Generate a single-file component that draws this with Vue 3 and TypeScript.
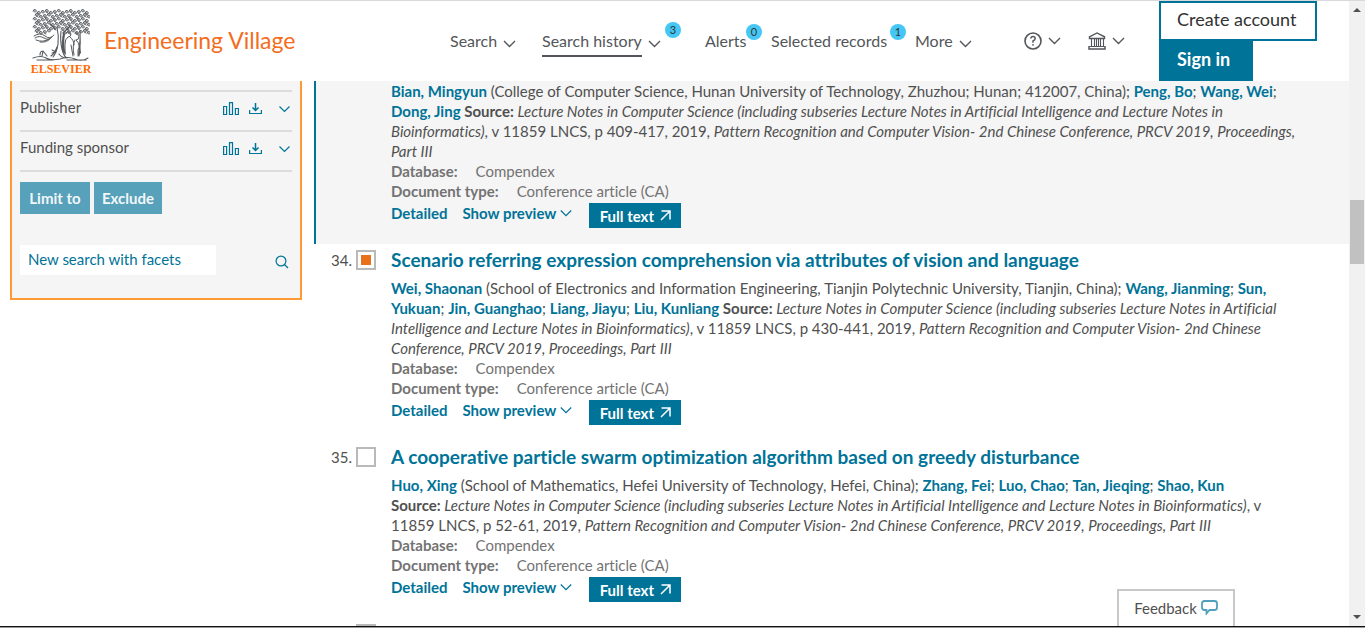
<script setup lang="ts">
import { ref } from 'vue'

type Kind = 'author' | 'label' | 'em' | 'plain'
interface Segment { kind: Kind; text: string }
interface RecordItem { id: number; title: string; lines: Segment[][] }

const a = (text: string): Segment => ({ kind: 'author', text })
const b = (text: string): Segment => ({ kind: 'label', text })
const i = (text: string): Segment => ({ kind: 'em', text })
const p = (text: string): Segment => ({ kind: 'plain', text })

const records: RecordItem[] = [
  {
    id: 33,
    title: '',
    lines: [
      [a('Bian, Mingyun'), p(' (College of Computer Science, Hunan University of Technology, Zhuzhou; Hunan; 412007, China); '), a('Peng, Bo'), p('; '), a('Wang, Wei'), p(';')],
      [a('Dong, Jing'), b(' Source: '), i('Lecture Notes in Computer Science (including subseries Lecture Notes in Artificial Intelligence and Lecture Notes in')],
      [i('Bioinformatics)'), p(', v 11859 LNCS, p 409-417, 2019, '), i('Pattern Recognition and Computer Vision- 2nd Chinese Conference, PRCV 2019, Proceedings,')],
      [i('Part III')],
    ],
  },
  {
    id: 34,
    title: 'Scenario referring expression comprehension via attributes of vision and language',
    lines: [
      [a('Wei, Shaonan'), p(' (School of Electronics and Information Engineering, Tianjin Polytechnic University, Tianjin, China); '), a('Wang, Jianming'), p('; '), a('Sun,')],
      [a('Yukuan'), p('; '), a('Jin, Guanghao'), p('; '), a('Liang, Jiayu'), p('; '), a('Liu, Kunliang'), b(' Source: '), i('Lecture Notes in Computer Science (including subseries Lecture Notes in Artificial')],
      [i('Intelligence and Lecture Notes in Bioinformatics)'), p(', v 11859 LNCS, p 430-441, 2019, '), i('Pattern Recognition and Computer Vision- 2nd Chinese')],
      [i('Conference, PRCV 2019, Proceedings, Part III')],
    ],
  },
  {
    id: 35,
    title: 'A cooperative particle swarm optimization algorithm based on greedy disturbance',
    lines: [
      [a('Huo, Xing'), p(' (School of Mathematics, Hefei University of Technology, Hefei, China); '), a('Zhang, Fei'), p('; '), a('Luo, Chao'), p('; '), a('Tan, Jieqing'), p('; '), a('Shao, Kun')],
      [b('Source: '), i('Lecture Notes in Computer Science (including subseries Lecture Notes in Artificial Intelligence and Lecture Notes in Bioinformatics)'), p(', v')],
      [p('11859 LNCS, p 52-61, 2019, '), i('Pattern Recognition and Computer Vision- 2nd Chinese Conference, PRCV 2019, Proceedings, Part III')],
    ],
  },
]

const selected = ref<number[]>([34])
const facetQuery = ref('New search with facets')
const facets = ['Publisher', 'Funding sponsor']
const nav = [
  { label: 'Search', menu: true, key: 'search' },
  { label: 'Search history', menu: true, count: 3, key: 'history' },
  { label: 'Alerts', menu: false, count: 0, key: 'alerts' },
  { label: 'Selected records', menu: false, count: 1, key: 'selected' },
  { label: 'More', menu: true, key: 'more' },
]

// Curled leaves that fill the crown of the tree in the logo.
const leaves: string[] = []
for (let row = 0; row < 6; row++) {
  for (let col = 0; col < 14; col++) {
    const x = 1 + col * 4 + (row % 2) * 2
    const y = 2 + row * 4 + ((col * 5 + row * 3) % 3) - 1
    if (row === 5 && col > 3 && col < 7) continue
    leaves.push(`M${x} ${y + 1}q1-3 3-1q1 2-1 2q-2 0-1-2`)
    if ((row + col) % 2) leaves.push(`M${x + 1} ${y + 2}l2 1`)
  }
}
const crown = leaves.join('')
</script>

<template>
  <div class="page">
    <header class="header">
      <a class="brand" href="#">
        <span class="logo">
          <svg class="tree" viewBox="0 0 58 52" aria-hidden="true">
            <g fill="none" stroke="#54585c" stroke-linecap="round">
              <path :d="crown" stroke-width=".9" />
              <path d="M2 27q6-4 11 0t9-1M3 29q4-3 9 0t8-1M4 31q7 3 13-1M8 33q6 1 10-3" stroke-width="1" />
              <path d="M25 18q2 9 1 17t-5 13M29 22q-1 10 1 18t5 9M25 38q-2 6-6 9M23 20l-5-5M31 24l7-7M31 29q0-8 6-9M48 22q1 12-1 25" stroke-width="1.1" />
              <path d="M34 24q4-3 5 1q0 3-3 3q-3 2-3 7v10M38 28q4 3 4 8M39 36l2 11M43 24q4-1 4 3t-3 4q5 5 2 10v6M43 31q-3 5-1 15" stroke-width="1" />
              <path d="M1 49q8-3 13 0t14 1q8-3 15 0t13-1M5 51h16M35 51h19M8 46q0-4 3-4l4 5M11 42l-1 5M20 41l4 2M20 44l4-1M27 45q3 4 7 4" stroke-width="1.1" />
            </g>
            <path d="M31 25q-2 8-1 17l4 4q-3-9-1-21M47 28l2 16-3 3 1-10" fill="#54585c" />
          </svg>
          <span class="publisher">ELSEVIER</span>
        </span>
        <span class="product">Engineering Village</span>
      </a>

      <nav class="nav" aria-label="Main">
        <a v-for="item in nav" :key="item.key" href="#" class="nav-item" :class="item.key">
          <span class="nav-label">{{ item.label }}</span>
          <svg v-if="item.menu" class="chev" viewBox="0 0 13 8" aria-hidden="true"><path d="M1 1l5.500 5.500L12 1" /></svg>
          <span v-if="item.count !== undefined" class="badge">{{ item.count }}</span>
        </a>
        <button type="button" class="nav-item help" aria-label="Help">
          <svg width="18" height="18" viewBox="0 0 18 18" fill="none" stroke="currentColor" aria-hidden="true">
            <circle cx="9" cy="9" r="8" stroke-width="1.600" />
            <path d="M6.800 6.500Q7 4.600 9 4.600t2.200 1.900Q11.200 8 9 9v1.800" stroke-width="1.500" />
            <circle cx="9" cy="12.800" r=".9" fill="currentColor" stroke="none" />
          </svg>
          <svg class="chev" viewBox="0 0 13 8" aria-hidden="true"><path d="M1 1l5.500 5.500L12 1" /></svg>
        </button>
        <button type="button" class="nav-item inst" aria-label="Institution">
          <svg width="18" height="18" viewBox="0 0 18 18" fill="none" stroke="currentColor" aria-hidden="true">
            <path d="M1.500 4.800L9 1l7.500 3.800v1.700h-15z" stroke-width="1.400" />
            <path d="M3.500 7v7.500M6.500 7v7.500M8.500 7v7.500M10.500 7v7.500M12.500 7v7.500M15.500 7v7.500M1.500 14.500h15" stroke-width="1.100" />
            <path d="M1 14v3h16v-3" stroke-width="1.500" />
          </svg>
          <svg class="chev" viewBox="0 0 13 8" aria-hidden="true"><path d="M1 1l5.500 5.500L12 1" /></svg>
        </button>
      </nav>

      <div class="account">
        <button type="button" class="create">Create account</button>
        <button type="button" class="signin">Sign in</button>
      </div>
    </header>

    <div class="body">
      <aside class="facets">
        <div v-for="name in facets" :key="name" class="facet">
          <span class="facet-name">{{ name }}</span>
          <button type="button" class="bare" :aria-label="`${name} chart`">
            <svg width="16" height="14" viewBox="0 0 16 14" fill="none" stroke="currentColor" stroke-width="1.200" aria-hidden="true"><path d="M.6 4.500h3v8h-3zM6.500.6h3v11.900h-3zM12.400 6.500h3v6h-3z" /></svg>
          </button>
          <button type="button" class="bare download" :aria-label="`${name} download`">
            <svg width="13" height="12" viewBox="0 0 13 12" fill="none" stroke="currentColor" aria-hidden="true"><path d="M.6 7v3.500h11.800V7" stroke-width="1.200" /><path d="M6.500 0v7.500M3.500 4.500l3 3 3-3" stroke-width="1.500" /></svg>
          </button>
          <button type="button" class="bare expand" :aria-label="`${name} expand`">
            <svg width="11" height="7" viewBox="0 0 11 7" fill="none" stroke="currentColor" stroke-width="1.200" aria-hidden="true"><path d="M.5.5l5 5 5-5" /></svg>
          </button>
        </div>
        <div class="facet-actions">
          <button type="button" class="limit">Limit to</button>
          <button type="button" class="exclude">Exclude</button>
        </div>
        <div class="facet-search">
          <input v-model="facetQuery" type="text" aria-label="New search with facets" />
          <button type="button" class="bare" aria-label="Search">
            <svg width="14" height="14" viewBox="0 0 14 14" fill="none" stroke="currentColor" stroke-width="1.200" aria-hidden="true"><circle cx="6" cy="6" r="4.900" /><path d="M9.500 9.500L13 13" /></svg>
          </button>
        </div>
      </aside>

      <main class="results">
        <article v-for="r in records" :key="r.id" class="record" :class="{ shaded: !r.title }">
          <div class="pick">
            <template v-if="r.title">
              <label :for="`pick-${r.id}`">{{ r.id }}.</label>
              <input :id="`pick-${r.id}`" v-model="selected" type="checkbox" :value="r.id" />
            </template>
          </div>
          <div class="content">
            <h2 v-if="r.title"><a href="#">{{ r.title }}</a></h2>
            <p class="citation">
              <span v-for="(line, n) in r.lines" :key="n" class="line"><template v-for="(s, k) in line" :key="k"><a v-if="s.kind === 'author'" href="#">{{ s.text }}</a><b v-else-if="s.kind === 'label'">{{ s.text }}</b><em v-else-if="s.kind === 'em'">{{ s.text }}</em><template v-else>{{ s.text }}</template></template></span>
            </p>
            <dl>
              <div><dt>Database:</dt><dd>Compendex</dd></div>
              <div><dt>Document type:</dt><dd>Conference article (CA)</dd></div>
            </dl>
            <div class="actions">
              <a href="#" class="detailed">Detailed</a>
              <button type="button" class="bare preview">
                Show preview
                <svg width="12" height="7" viewBox="0 0 12 7" fill="none" stroke="currentColor" stroke-width="1.200" aria-hidden="true"><path d="M.8.5L6 5.700 11.200.5" /></svg>
              </button>
              <button type="button" class="fulltext">
                Full text
                <svg width="11" height="11" viewBox="0 0 11 11" fill="none" stroke="currentColor" stroke-width="1.500" aria-hidden="true"><path d="M1.500 1H10v8.500M10 1L1 10" /></svg>
              </button>
            </div>
          </div>
        </article>
        <article class="record">
          <div class="pick last">
            <input v-model="selected" type="checkbox" :value="36" aria-label="Record 36" />
          </div>
        </article>
      </main>
      <button type="button" class="feedback">
        Feedback
        <svg width="17" height="15" viewBox="0 0 17 15" fill="none" stroke="#4f9fbd" stroke-width="1.800" aria-hidden="true"><path d="M3.500 1h10Q16 1 16 3.500v4Q16 10 13.500 10H8.500L5.500 13.500V10H3.500Q1 10 1 7.500v-4Q1 1 3.500 1z" /></svg>
      </button>
    </div>

    <div class="scrollbar" aria-hidden="true">
      <svg width="8" height="4" viewBox="0 0 8 4"><path d="M0 4l4-4 4 4z" /></svg>
      <div class="track"><div class="thumb"></div></div>
      <svg width="8" height="4" viewBox="0 0 8 4"><path d="M0 0l4 4 4-4z" /></svg>
    </div>
    <div class="edge"></div>
  </div>
</template>

<style>
body {
  margin: 0;
  overflow: hidden;
}
</style>

<style scoped>
.page {
  box-sizing: border-box;
  display: grid;
  grid-template-columns: minmax(0, 1fr) 16px;
  grid-template-rows: 80px minmax(0, 1fr) 2px;
  height: 100vh;
  border-top: 1px solid #d8d8dd;
  background: #fff;
  color: #505050;
  font: 15px/20px Lato, "Noto Sans", sans-serif;
  font-variant-ligatures: no-common-ligatures;
}
.page *,
.page *::before {
  box-sizing: border-box;
}
a {
  color: #007398;
  text-decoration: none;
}
button {
  padding: 0;
  border: 0;
  font: inherit;
  cursor: pointer;
}
.bare {
  background: none;
  color: #007398;
}
svg {
  display: block;
  flex: none;
}

.header {
  display: flex;
}
.brand {
  display: flex;
  padding: 8px 0 0 32px;
  gap: 14px;
}
.logo {
  display: flex;
  flex-direction: column;
  align-items: center;
  width: 58px;
}
.tree {
  width: 58px;
  height: 52px;
}
.publisher {
  color: #ff6c00;
  font: 700 12px/16px "Liberation Serif", serif;
}
.product {
  color: #f36d21;
  font-size: 23px;
  line-height: 62px;
}
.nav {
  display: flex;
  margin-left: auto;
}
.nav-item {
  position: relative;
  display: flex;
  align-items: center;
  gap: 6px;
  height: 28px;
  margin-top: 26px;
  background: none;
  color: #53565a;
  font-size: 16px;
  line-height: 28px;
  white-space: nowrap;
}
.search { width: 92px; }
.history { width: 163px; }
.alerts { width: 66px; }
.selected { width: 144px; }
.more { width: 109px; }
.help { width: 64px; }
.inst { width: 71px; }
.history .nav-label {
  margin-top: 2px;
  border-bottom: 2px solid #53565a;
}
.chev {
  width: 13px;
  height: 8px;
  fill: none;
  stroke: #53565a;
  stroke-width: 1.4;
}
a .chev {
  margin-top: 6px;
}
.badge {
  position: absolute;
  top: -3px;
  right: 9px;
  width: 16px;
  height: 16px;
  border-radius: 50%;
  background: #44c7f4;
  color: #333;
  font-size: 11px;
  line-height: 16px;
  text-align: center;
}
.history .badge {
  top: -5px;
  right: 24px;
}
.account {
  display: flex;
  flex-direction: column;
  align-items: flex-start;
  width: 190px;
}
.create,
.signin {
  min-width: 158px;
  height: 40px;
  padding: 0 16px 4px;
  border: 2px solid #007398;
  background: #fff;
  color: #323232;
  font-size: 18px;
  line-height: 32px;
  text-align: left;
}
.signin {
  min-width: 94px;
  background: #007398;
  color: #fff;
  font-weight: 700;
}

.body {
  position: relative;
  display: flex;
  align-items: flex-start;
  gap: 12px;
  padding-left: 10px;
  overflow: hidden;
}
.facets {
  flex: none;
  width: 292px;
  padding: 9px 8px 23px;
  border: 2px solid #f93;
  border-top: 0;
  background: #f5f5f5;
}
.facet {
  display: flex;
  align-items: center;
  height: 40px;
  padding-bottom: 4px;
  border-top: 2px solid #dcdcdc;
}
.facet-name {
  flex: 1;
  padding-bottom: 4px;
}
.download {
  margin: 0 13px 0 10px;
}
.expand {
  padding-left: 4px;
  margin-right: 2px;
}
.facet-actions {
  display: flex;
  gap: 4px;
  padding-top: 10px;
  border-top: 2px solid #dcdcdc;
}
.facet-actions button {
  height: 32px;
  background: #57a1ba;
  color: #f1f7f9;
  font-weight: 700;
}
.limit { width: 70px; }
.exclude { width: 68px; }
.facet-search {
  display: flex;
  align-items: center;
  justify-content: space-between;
  margin-top: 31px;
  padding-right: 3px;
}
.facet-search input {
  width: 196px;
  height: 30px;
  padding: 0 8px 2px;
  border: 0;
  background: #fff;
  color: #007398;
  font: inherit;
}
.facet-search .bare {
  padding-top: 4px;
}

.results {
  flex: 1;
  min-width: 0;
}
.record {
  display: flex;
  padding: 5px 0 16px 17px;
}
.shaded {
  padding-top: 0;
  padding-left: 15px;
  border-left: 2px solid #007398;
  background: #f5f5f5;
}
.pick {
  display: flex;
  flex: none;
  justify-content: space-between;
  width: 45px;
  margin-right: 15px;
}
.last {
  justify-content: flex-end;
}
.pick label {
  line-height: 22px;
}
.pick input {
  display: grid;
  place-content: center;
  width: 20px;
  height: 20px;
  margin: 1px 0 0;
  border: 2px solid #b9b9b9;
  background: #fff;
  appearance: none;
}
.pick input:checked::before {
  width: 10px;
  height: 10px;
  background: #e9711c;
  content: "";
}
.content {
  min-width: 0;
}
h2 {
  margin: 0 0 7px;
  font-size: 19px;
  font-weight: 700;
  line-height: 22px;
}
.citation {
  margin: 0;
}
.citation a {
  font-weight: 700;
}
.line {
  display: block;
  white-space: pre;
}
dl {
  margin: 0 0 2px;
  color: #737373;
}
dl div {
  display: flex;
  gap: 18px;
}
dt {
  font-weight: 700;
}
dd {
  margin: 0;
}
.actions {
  display: flex;
  height: 25px;
  font-weight: 700;
}
.detailed {
  margin-right: 15px;
}
.preview {
  display: flex;
  align-items: center;
  gap: 4px;
  height: 20px;
  margin-right: 17px;
}
.fulltext {
  display: flex;
  align-items: center;
  justify-content: center;
  gap: 6px;
  width: 92px;
  background: #007398;
  color: #fff;
}
.feedback {
  position: absolute;
  right: 114px;
  bottom: 0;
  display: flex;
  align-items: center;
  justify-content: center;
  gap: 4px;
  width: 118px;
  height: 37px;
  padding-bottom: 2px;
  border: 2px solid #c8c8c8;
  border-bottom: 0;
  background: #fff;
  color: #505050;
}

.scrollbar {
  display: flex;
  flex-direction: column;
  align-items: center;
  grid-area: 1 / 2 / 3 / 3;
  padding: 7px 0;
  background: #f1f1f1;
  fill: #505050;
}
.track {
  flex: 1;
  width: 14px;
  padding-top: 188px;
}
.thumb {
  height: 64px;
  background: #c1c1c1;
}
.edge {
  grid-column: 1 / 3;
  border-top: 1px solid #111;
  background: #999;
}
</style>
